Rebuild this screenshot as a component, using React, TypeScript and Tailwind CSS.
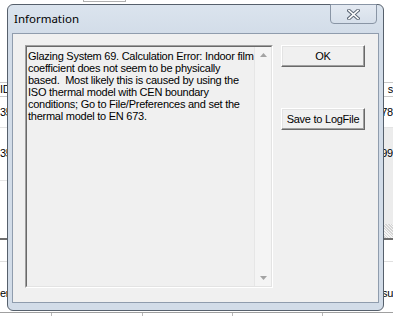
const ui = { fontFamily: '"Liberation Sans", Arial, sans-serif' };

const message = `Glazing System 69. Calculation Error: Indoor film
coefficient does not seem to be physically
based.  Most likely this is caused by using the
ISO thermal model with CEN boundary
conditions; Go to File/Preferences and set the
thermal model to EN 673.`;

const CloseGlyph = () => (
  <svg width="13" height="11" viewBox="0 0 13 11">
    <path d="M2 1.5 L11 9.5 M11 1.5 L2 9.5" stroke="#5d6876" strokeWidth="3.6" strokeLinecap="square" />
    <path d="M2 1.5 L11 9.5 M11 1.5 L2 9.5" stroke="#ffffff" strokeWidth="1.6" strokeLinecap="square" />
  </svg>
);

const Arrow = ({ down }: { down?: boolean }) => (
  <svg width="7" height="4" viewBox="0 0 7 4">
    <path d={down ? "M0 0 L7 0 L3.5 4 Z" : "M0 4 L7 4 L3.5 0 Z"} fill="#a3a3a3" />
  </svg>
);

const ClassicButton = ({ children }: { children: React.ReactNode }) => (
  <button
    className="w-[84px] h-[22px] bg-[#f0f0f0] text-[11px] tracking-[-0.25px] text-black border border-t-white border-l-white border-r-[#696969] border-b-[#696969] shadow-[inset_-1px_-1px_0_#a0a0a0,inset_1px_1px_0_#e3e3e3] flex items-center justify-center leading-none"
    style={ui}
  >
    {children}
  </button>
);

// the table of the main program, mostly hidden behind the dialog
const BackgroundApp = () => (
  <div className="flex flex-col w-full h-full text-[11px] tracking-[-0.25px] text-black" style={ui}>
    <div className="h-[82px] shrink-0 bg-white">
      <div className="ml-[83px] w-[43px] h-[2px] border border-t-0 border-[#b0b0b0]" />
    </div>
    <div className="h-[15px] shrink-0 border-t border-b border-[#c8c8c8] bg-white flex justify-between items-center">
      <span>ID</span>
      <span>s</span>
    </div>
    <div className="h-[30px] shrink-0 bg-white flex justify-between items-center">
      <span>35</span>
      <span>78</span>
    </div>
    <div className="h-[51px] shrink-0 bg-white flex justify-between border-t border-[#e4e4e4]">
      <span className="self-center">35</span>
      <div className="w-[14px] bg-[#ececec] flex items-center justify-end">99</div>
    </div>
    <div className="h-[60px] shrink-0 flex justify-between">
      <div className="w-[8px] bg-white border-t border-[#e6e6e6] mt-[2px]" />
      <div className="w-[14px] bg-[#ececec] flex flex-col justify-end">
        <div className="h-[14px] bg-[repeating-linear-gradient(45deg,#d4d4d4_0_1px,#f4f4f4_1px_2px)]" />
      </div>
    </div>
    <div className="h-[2px] shrink-0 bg-[#6d6d6d]" />
    <div className="h-[22px] shrink-0 bg-white border-b border-[#e0e0e0]" />
    <div className="h-[51px] shrink-0 bg-white flex justify-between items-start pt-[23px] border-b border-[#a0a0a0]">
      <span>er</span>
      <span>su</span>
    </div>
    <div className="flex-1 bg-white flex">
      <div className="w-[52px] border-r border-[#b8b8b8]" />
      <div className="w-[91px] border-r border-[#b8b8b8]" />
      <div className="w-[90px] border-r border-[#b8b8b8]" />
      <div className="w-[90px] border-r border-[#b8b8b8]" />
    </div>
  </div>
);

export default function App() {
  return (
    <div className="relative w-[393px] h-[316px] overflow-hidden bg-white">
      <BackgroundApp />

      <div className="absolute left-[7px] top-[4px] w-[377px] h-[307px] rounded-[6px] border border-[#56606c] bg-[linear-gradient(#dbe4ee,#d2dce8_30px,#d2dce8)] flex flex-col">
        {/* title bar */}
        <div className="h-[28px] flex items-start relative">
          <span className="mt-[7px] ml-[6px] text-[11.5px] leading-[14px] text-black" style={{ fontFamily: '"Noto Sans", sans-serif' }}>
            Information
          </span>
          <div className="absolute left-[322px] -top-px w-[47px] h-[20px] rounded-b-[4px] border border-[#8995a5] bg-[linear-gradient(#e4eaf2,#d6dfea)] flex items-center justify-center">
            <CloseGlyph />
          </div>
        </div>

        {/* client area */}
        <div className="mx-[4px] mb-[7px] flex-1 border border-[#8f9cad] bg-[#f0f0f0] flex items-start pl-[12px] pt-[11px] gap-[8px]">
          <div className="w-[248px] h-[243px] border-t border-l border-t-[#a0a0a0] border-l-[#a0a0a0] border-r border-b border-r-white border-b-white flex">
            <div className="flex-1 border-t border-l border-t-[#696969] border-l-[#696969] border-r border-b border-r-[#e3e3e3] border-b-[#e3e3e3] bg-[#f0f0f0] flex">
              <div
                className="flex-1 pl-[1px] pt-[3px] text-[11px] leading-[12px] tracking-[-0.25px] text-black whitespace-pre"
                style={ui}
              >
                {message}
              </div>
              <div className="w-[17px] bg-[#f4f4f4] border-l border-[#e6e6e6] flex flex-col items-center justify-between pt-[6px] pb-[6px]">
                <Arrow />
                <Arrow down />
              </div>
            </div>
          </div>

          <div className="flex flex-col gap-[41px]">
            <ClassicButton>OK</ClassicButton>
            <ClassicButton>Save to LogFile</ClassicButton>
          </div>
        </div>
      </div>
    </div>
  );
}
